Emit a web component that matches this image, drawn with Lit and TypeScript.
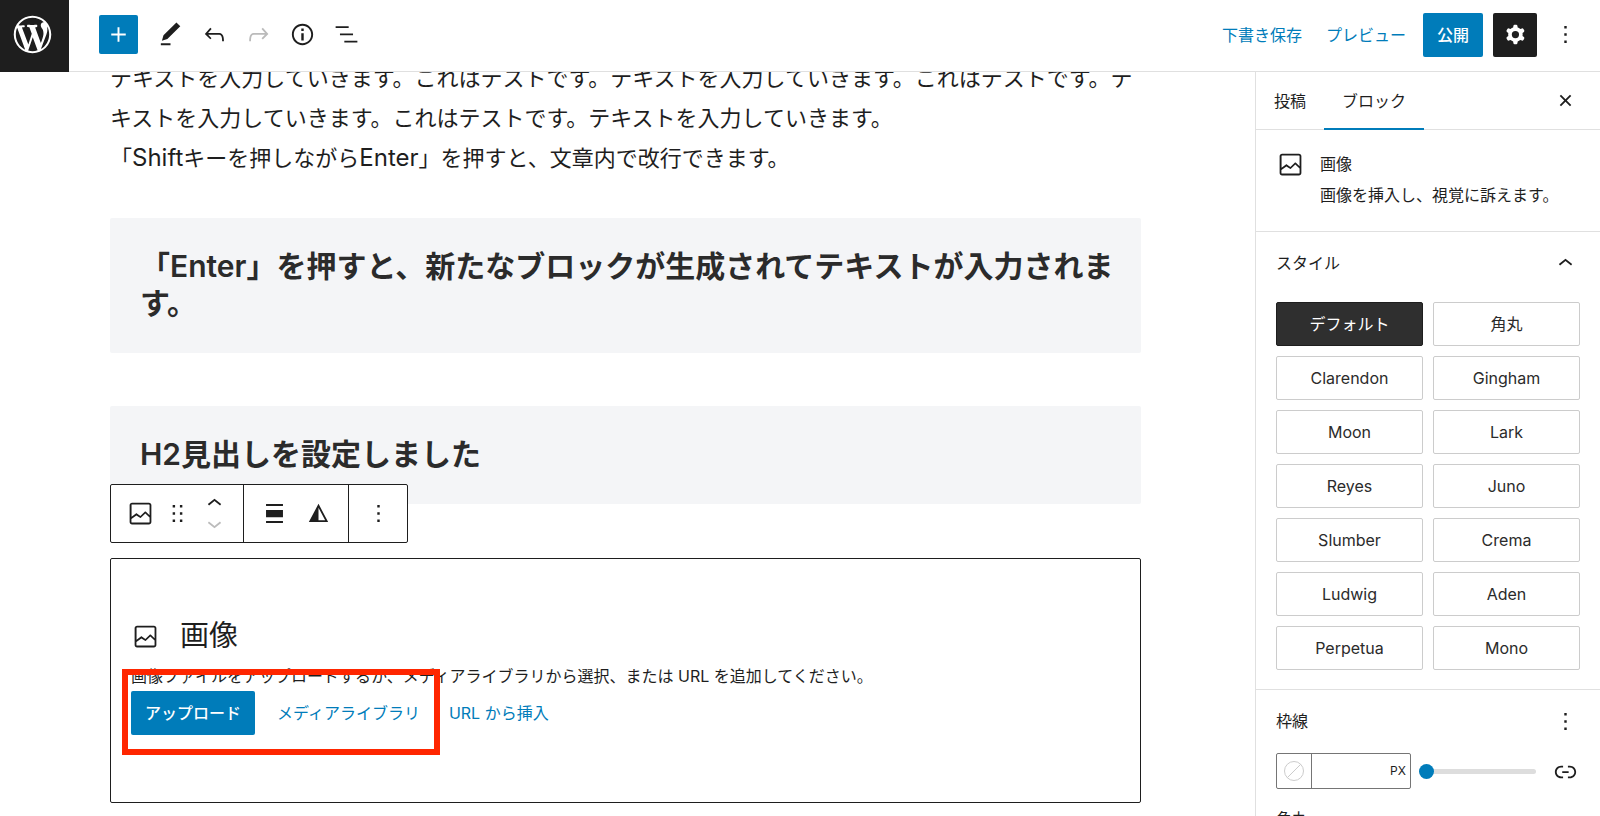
import { LitElement, html, css, svg } from "lit";
import { customElement, property, state } from "lit/decorators.js";
import { classMap } from "lit/directives/class-map.js";

const icons: Record<string, string> = {
  plus: "M18 11.2h-5.2V6h-1.6v5.2H6v1.6h5.2V18h1.6v-5.2H18z",
  edit: "M20.1 5.1L16.9 2 6.2 12.7l-1.3 4.4 4.5-1.3L20.1 5.1zM4 20.8h8v-1.5H4v1.5z",
  undo: "M18.3 11.7c-.6-.6-1.4-.9-2.3-.9H6.7l2.9-3.3-1.1-1-4.5 5L8.5 16l1-1-2.7-2.7H16c.5 0 .9.2 1.3.5 1 1 1 3.4 1 4.5v.3h1.5v-.2c0-1.5 0-4.3-1.5-5.7z",
  redo: "M15.6 6.5l-1.1 1 2.9 3.3H8c-.9 0-1.7.3-2.3.9-1.4 1.5-1.4 4.2-1.4 5.6v.2h1.5v-.3c0-1.1 0-3.5 1-4.5.3-.3.7-.5 1.3-.5h9.2L14.5 15l1.1 1.1 4.6-4.6-4.6-5z",
  info: "M12 3.2c-4.8 0-8.8 3.9-8.8 8.8 0 4.8 3.9 8.8 8.8 8.8 4.8 0 8.8-3.9 8.8-8.8 0-4.8-4-8.8-8.8-8.8zm0 16c-4 0-7.2-3.3-7.2-7.2C4.8 8 8 4.8 12 4.8s7.2 3.3 7.2 7.2c0 4-3.2 7.2-7.2 7.2zM11 17h2v-6h-2v6zm0-8h2V7h-2v2z",
  list: "M13.8 5.2H3v1.5h10.8V5.2zm-3.6 12v1.5H21v-1.5H10.2zm7.2-6H6.6v1.5h10.8v-1.5z",
  more: "M13 19h-2v-2h2v2zm0-6h-2v-2h2v2zm0-6h-2V5h2v2z",
  close: "M12 13.06l3.712 3.713 1.061-1.06L13.061 12l3.712-3.712-1.06-1.06L12 10.938 8.288 7.227l-1.061 1.06L10.939 12l-3.712 3.712 1.06 1.061L12 13.061z",
  up: "M6.5 12.4L12 8l5.5 4.4-.9 1.2L12 10l-4.5 3.6-1-1.2z",
  down: "M17.5 11.6L12 16l-5.5-4.4.9-1.2L12 14l4.5-3.6 1 1.2z",
  drag: "M8 7h2V5H8v2zm0 6h2v-2H8v2zm0 6h2v-2H8v2zm6-14v2h2V5h-2zm0 8h2v-2h-2v2zm0 6h2v-2h-2v2z",
  align: "M5 15h14V9H5v6zm0 4.8h14v-1.5H5v1.5zM5 4.2v1.5h14V4.2H5z",
  filter: "M12 4 4 19h16L12 4zm0 3.2 5.5 10.3H12V7.2z",
  image: "M19 3H5c-1.1 0-2 .9-2 2v14c0 1.1.9 2 2 2h14c1.1 0 2-.9 2-2V5c0-1.1-.9-2-2-2zM5 4.5h14c.3 0 .5.2.5.5v8.4l-3-2.9c-.3-.3-.8-.3-1 0L11.9 14 9 12c-.3-.2-.6-.2-.8 0l-3.6 2.6V5c-.1-.3.1-.5.4-.5zm14 15H5c-.3 0-.5-.2-.5-.5v-2.4l4.1-3 3 1.9c.3.2.7.2.9-.1L16 12l3.5 3.4V19c0 .3-.2.5-.5.5z",
  cog: "M10.289 4.836A1 1 0 0111.275 4h1.306a1 1 0 01.987.836l.244 1.466c.787.26 1.503.679 2.108 1.218l1.393-.522a1 1 0 011.216.437l.653 1.13a1 1 0 01-.23 1.273l-1.148.944a6.025 6.025 0 010 2.435l1.149.946a1 1 0 01.23 1.272l-.653 1.13a1 1 0 01-1.216.437l-1.394-.522c-.605.54-1.32.958-2.108 1.218l-.244 1.466a1 1 0 01-.987.836h-1.306a1 1 0 01-.986-.836l-.244-1.466a5.995 5.995 0 01-2.108-1.218l-1.394.522a1 1 0 01-1.217-.436l-.653-1.131a1 1 0 01.23-1.272l1.149-.946a6.026 6.026 0 010-2.435l-1.148-.944a1 1 0 01-.23-1.272l.653-1.131a1 1 0 011.217-.437l1.393.522a5.994 5.994 0 012.108-1.218l.244-1.466zM14.929 12a3 3 0 11-6 0 3 3 0 016 0z",
  link: "M15.6 7.2H14v1.5h1.6c2 0 3.7 1.7 3.7 3.7s-1.7 3.7-3.7 3.7H14v1.5h1.6c2.8 0 5.2-2.3 5.2-5.2 0-2.9-2.3-5.2-5.2-5.2zM4.7 12.4c0-2 1.7-3.7 3.7-3.7H10V7.2H8.4c-2.9 0-5.2 2.3-5.2 5.2 0 2.9 2.3 5.2 5.2 5.2H10v-1.5H8.4c-2 0-3.7-1.7-3.7-3.7zm4.6.9h5.3v-1.5H9.3v1.5z",
};

const wordpressMark =
  "M20 10c0-5.51-4.49-10-10-10C4.48 0 0 4.49 0 10c0 5.52 4.48 10 10 10 5.51 0 10-4.48 10-10zM7.78 15.37L4.37 6.22c.55-.02 1.17-.08 1.17-.08.5-.06.44-1.13-.06-1.11 0 0-1.45.11-2.37.11-.18 0-.37 0-.58-.01C4.12 2.69 6.87 1.11 10 1.11c2.33 0 4.45.87 6.05 2.34-.68-.11-1.65.39-1.65 1.58 0 .74.45 1.36.9 2.1.35.61.55 1.36.55 2.46 0 1.49-1.4 5-1.4 5l-3.03-8.37c.54-.02.82-.17.82-.17.5-.05.44-1.25-.06-1.22 0 0-1.44.12-2.38.12-.87 0-2.33-.12-2.33-.12-.5-.03-.56 1.2-.06 1.22l.92.08 1.26 3.41zM17.41 10c.24-.64.74-1.87.43-4.25.7 1.29 1.05 2.71 1.05 4.25 0 3.29-1.73 6.24-4.4 7.78.97-2.59 1.94-5.2 2.92-7.78zM6.1 18.09C3.12 16.65 1.11 13.53 1.11 10c0-1.3.23-2.48.72-3.59C3.25 10.3 4.67 14.2 6.1 18.09zm4.03-6.63l2.58 6.98c-.86.29-1.76.45-2.71.45-.79 0-1.57-.11-2.29-.33.81-2.38 1.62-4.74 2.42-7.1z";

const icon = (name: string) => html`
  <svg class="icon" viewBox="0 0 24 24" aria-hidden="true">
    ${svg`<path fill-rule="evenodd" d=${icons[name]}></path>`}
  </svg>
`;

const shared = css`
  :host,
  *,
  *::before,
  *::after {
    box-sizing: border-box;
  }
  h2,
  h3,
  p {
    margin: 0;
    font-weight: 400;
  }
  button,
  input,
  select {
    margin: 0;
    padding: 0;
    border: 0;
    background: none;
    color: inherit;
    font: inherit;
    border-radius: 2px;
  }
  button {
    cursor: pointer;
  }
  .icon {
    display: block;
    flex: none;
    width: 29px;
    height: 29px;
    fill: currentColor;
  }
  .icon-button {
    display: flex;
    align-items: center;
    justify-content: center;
    width: 44px;
    height: 44px;
  }
  .primary {
    height: 44px;
    padding: 0 14px;
    background: #007cba;
    color: #fff;
    font-weight: 500;
  }
  .tertiary {
    height: 44px;
    padding: 0 7px;
    color: #007cba;
  }
`;

@customElement("editor-header")
export class EditorHeader extends LitElement {
  static styles = [
    shared,
    css`
      :host {
        display: flex;
        align-items: center;
        height: 72px;
        padding: 0 17px 2px 0;
        border-bottom: 1px solid #e0e0e0;
        background: #fff;
      }
      .home {
        display: flex;
        align-items: center;
        justify-content: center;
        align-self: stretch;
        width: 69px;
        margin: 0 30px -3px 0;
        padding: 0 4px 3px 0;
        background: #1e1e1e;
        color: #fff;
      }
      .mark {
        width: 45px;
        height: 45px;
        fill: currentColor;
      }
      .tools,
      .settings {
        display: flex;
        align-items: center;
      }
      .settings {
        gap: 10px;
        margin-left: auto;
      }
      .inserter {
        display: flex;
        align-items: center;
        justify-content: center;
        width: 39px;
        height: 39px;
        margin-right: 10px;
        background: #007cba;
        color: #fff;
      }
      .redo {
        color: #bbb;
      }
      .toggle {
        background: #1e1e1e;
        color: #fff;
      }
      .options {
        width: 36px;
      }
    `,
  ];

  render() {
    return html`
      <a class="home" href="#" aria-label="投稿一覧を表示">
        <svg class="mark" viewBox="-2 -2 24 24" aria-hidden="true">
          <path d=${wordpressMark}></path>
        </svg>
      </a>
      <div class="tools">
        <button class="inserter" aria-label="ブロック挿入">${icon("plus")}</button>
        <button class="icon-button" aria-label="ツール">${icon("edit")}</button>
        <button class="icon-button" aria-label="元に戻す">${icon("undo")}</button>
        <button class="icon-button redo" aria-label="やり直す">${icon("redo")}</button>
        <button class="icon-button" aria-label="詳細">${icon("info")}</button>
        <button class="icon-button" aria-label="リスト表示">${icon("list")}</button>
      </div>
      <div class="settings">
        <button class="tertiary">下書き保存</button>
        <button class="tertiary">プレビュー</button>
        <button class="primary">公開</button>
        <button class="icon-button toggle" aria-label="設定">${icon("cog")}</button>
        <button class="icon-button options" aria-label="オプション">${icon("more")}</button>
      </div>
    `;
  }
}

@customElement("block-toolbar")
export class BlockToolbar extends LitElement {
  static styles = [
    shared,
    css`
      :host {
        display: flex;
        height: 59px;
        border: 1px solid #1e1e1e;
        border-radius: 2px;
        background: #fff;
      }
      .group {
        display: flex;
        align-items: center;
        padding: 0 7px;
      }
      .group + .group {
        padding: 0 8px;
        border-left: 1px solid #1e1e1e;
      }
      .group:last-child {
        padding: 0 7px;
      }
      .drag {
        width: 30px;
      }
      .movers {
        display: flex;
        flex-direction: column;
      }
      .mover {
        height: 20px;
      }
      .disabled {
        color: #bbb;
      }
    `,
  ];

  render() {
    return html`
      <div class="group">
        <button class="icon-button" aria-label="画像">${icon("image")}</button>
        <button class="icon-button drag" aria-label="ドラッグ">${icon("drag")}</button>
        <div class="movers">
          <button class="icon-button mover" aria-label="上に移動">${icon("up")}</button>
          <button class="icon-button mover disabled" aria-label="下に移動">${icon("down")}</button>
        </div>
      </div>
      <div class="group">
        <button class="icon-button" aria-label="配置">${icon("align")}</button>
        <button class="icon-button" aria-label="デュオトーン">${icon("filter")}</button>
      </div>
      <div class="group">
        <button class="icon-button" aria-label="オプション">${icon("more")}</button>
      </div>
    `;
  }
}

@customElement("editor-canvas")
export class EditorCanvas extends LitElement {
  static styles = [
    shared,
    css`
      :host {
        display: block;
        overflow: hidden;
        padding: 0 114px 0 110px;
      }
      .paragraph {
        margin-top: -14px;
        font-size: 22px;
        line-height: 40px;
        white-space: nowrap;
      }
      .latin {
        font-size: 24px;
        line-height: 1;
      }
      .heading {
        padding: 30px 30px 31px;
        border-radius: 2px;
        background: #f4f5f7;
        color: #2b2b2b;
        font-size: 30px;
        font-weight: 600;
        line-height: 37px;
        white-space: nowrap;
      }
      .first {
        margin: 40px 0 53px;
      }
      .block {
        position: relative;
        margin-top: 54px;
        padding: 55px 20px 67px;
        border: 1px solid #1e1e1e;
        border-radius: 2px;
      }
      .toolbar {
        position: absolute;
        left: -1px;
        bottom: calc(100% + 16px);
      }
      .label {
        display: flex;
        align-items: center;
        gap: 20px;
        height: 44px;
        font-size: 29px;
        line-height: 44px;
      }
      .help {
        margin: 6px 0 3px;
      }
      .actions {
        display: flex;
        gap: 15px;
      }
      .marker {
        position: absolute;
        left: 11px;
        top: 110px;
        width: 318px;
        height: 86px;
        border: 6px solid #ff2600;
        pointer-events: none;
      }
    `,
  ];

  render() {
    return html`
      <p class="paragraph">
        テキストを入力していきます。これはテストです。テキストを入力していきます。これはテストです。テ<br />キストを入力していきます。これはテストです。テキストを入力していきます。<br />「<span class="latin">Shift</span>キーを押しながら<span class="latin">Enter</span>」を押すと、文章内で改行できます。
      </p>
      <h2 class="heading first">「Enter」を押すと、新たなブロックが生成されてテキストが入力されま<br />す。</h2>
      <h2 class="heading">H2見出しを設定しました</h2>
      <section class="block">
        <block-toolbar class="toolbar"></block-toolbar>
        <div class="label">${icon("image")}<span>画像</span></div>
        <p class="help">画像ファイルをアップロードするか、メディアライブラリから選択、または URL を追加してください。</p>
        <div class="actions">
          <button class="primary">アップロード</button>
          <button class="tertiary">メディアライブラリ</button>
          <button class="tertiary">URL から挿入</button>
        </div>
        <div class="marker"></div>
      </section>
    `;
  }
}

@customElement("block-inspector")
export class BlockInspector extends LitElement {
  static styles = [
    shared,
    css`
      :host {
        display: block;
        overflow: hidden;
        border-left: 1px solid #e0e0e0;
        background: #fff;
      }
      .tabs {
        display: flex;
        align-items: stretch;
        height: 58px;
        padding-right: 13px;
        border-bottom: 1px solid #e0e0e0;
      }
      .tab {
        margin-bottom: -1px;
        padding: 0 18px;
        border-radius: 0;
      }
      .active {
        box-shadow: inset 0 -2px #007cba;
      }
      .close {
        align-self: center;
        margin-left: auto;
      }
      .card {
        display: flex;
        gap: 15px;
        padding: 20px 20px 24px;
        border-bottom: 1px solid #e0e0e0;
      }
      .summary {
        display: grid;
        gap: 7px;
        padding-top: 2px;
        white-space: nowrap;
      }
      .title {
        font-size: 16px;
      }
      .panel {
        padding: 0 20px 19px;
        border-bottom: 1px solid #e0e0e0;
      }
      .panel-head {
        display: flex;
        align-items: center;
        justify-content: space-between;
        width: 100%;
        height: 62px;
        text-align: left;
      }
      .styles {
        display: grid;
        grid-template-columns: 1fr 1fr;
        gap: 10px;
        padding-top: 8px;
      }
      .style {
        height: 44px;
        border: 1px solid #ccc;
        color: #2b2b2b;
        font-size: 16px;
      }
      .selected {
        border-color: #1e1e1e;
        background: #2f2f2f;
        color: #fff;
      }
      .border-row {
        display: flex;
        align-items: center;
        gap: 8px;
        padding: 1px 0 18px;
      }
      .field {
        display: flex;
        flex: none;
        width: 135px;
        height: 36px;
        border: 1px solid #757575;
        border-radius: 2px;
      }
      .swatch {
        display: flex;
        align-items: center;
        justify-content: center;
        flex: none;
        width: 35px;
        border-right: 1px solid #757575;
        border-radius: 0;
      }
      .none {
        width: 20px;
        height: 20px;
        fill: none;
        stroke: #ccc;
      }
      .width {
        flex: 1;
        min-width: 0;
      }
      .unit {
        appearance: none;
        flex: none;
        margin-right: 4px;
        font-size: 12px;
      }
      .slider {
        appearance: none;
        flex: 1;
        min-width: 0;
        height: 15px;
      }
      .slider::-webkit-slider-runnable-track {
        height: 5px;
        border-radius: 3px;
        background: #ddd;
      }
      .slider::-webkit-slider-thumb {
        appearance: none;
        width: 15px;
        height: 15px;
        margin-top: -5px;
        border-radius: 50%;
        background: #007cba;
      }
      .link {
        margin-left: 7px;
      }
    `,
  ];

  @property({ type: Array }) presets = [
    "デフォルト", "角丸", "Clarendon", "Gingham", "Moon", "Lark", "Reyes",
    "Juno", "Slumber", "Crema", "Ludwig", "Aden", "Perpetua", "Mono",
  ];
  @state() private current = "デフォルト";

  render() {
    return html`
      <div class="tabs">
        <button class="tab">投稿</button>
        <button class="tab active">ブロック</button>
        <button class="icon-button close" aria-label="設定を閉じる">${icon("close")}</button>
      </div>
      <div class="card">
        ${icon("image")}
        <div class="summary">
          <h2 class="title">画像</h2>
          <p>画像を挿入し、視覚に訴えます。</p>
        </div>
      </div>
      <section class="panel">
        <button class="panel-head" aria-expanded="true">スタイル ${icon("up")}</button>
        <div class="styles">
          ${this.presets.map(
            (name) => html`<button
              class=${classMap({ style: true, selected: name === this.current })}
              @click=${() => (this.current = name)}
            >${name}</button>`
          )}
        </div>
      </section>
      <section class="panel">
        <div class="panel-head">
          <h3 class="title">枠線</h3>
          <button aria-label="枠線オプション">${icon("more")}</button>
        </div>
        <div class="border-row">
          <div class="field">
            <button class="swatch" aria-label="枠線の色">
              <svg class="none" viewBox="0 0 20 20" aria-hidden="true">
                <circle cx="10" cy="10" r="9.5"></circle>
                <path d="M3.3 16.7 16.7 3.3"></path>
              </svg>
            </button>
            <input class="width" type="text" aria-label="枠線の幅" />
            <select class="unit" aria-label="単位"><option>PX</option></select>
          </div>
          <input class="slider" type="range" min="0" max="100" value="0" aria-label="枠線の幅" />
          <button class="link" aria-label="辺のリンクを解除">${icon("link")}</button>
        </div>
        <h3 class="title">角丸</h3>
      </section>
    `;
  }
}

@customElement("app-root")
export class AppRoot extends LitElement {
  static styles = css`
    :host {
      display: grid;
      grid-template-rows: auto minmax(0, 1fr);
      height: 100vh;
      overflow: hidden;
      background: #fff;
      color: #1e1e1e;
      font: 16px/24px Inter, "Noto Sans CJK JP", sans-serif;
    }
    .body {
      display: grid;
      grid-template-columns: minmax(0, 1fr) 345px;
      min-height: 0;
    }
  `;

  render() {
    return html`
      <editor-header></editor-header>
      <div class="body">
        <editor-canvas></editor-canvas>
        <block-inspector></block-inspector>
      </div>
    `;
  }
}
